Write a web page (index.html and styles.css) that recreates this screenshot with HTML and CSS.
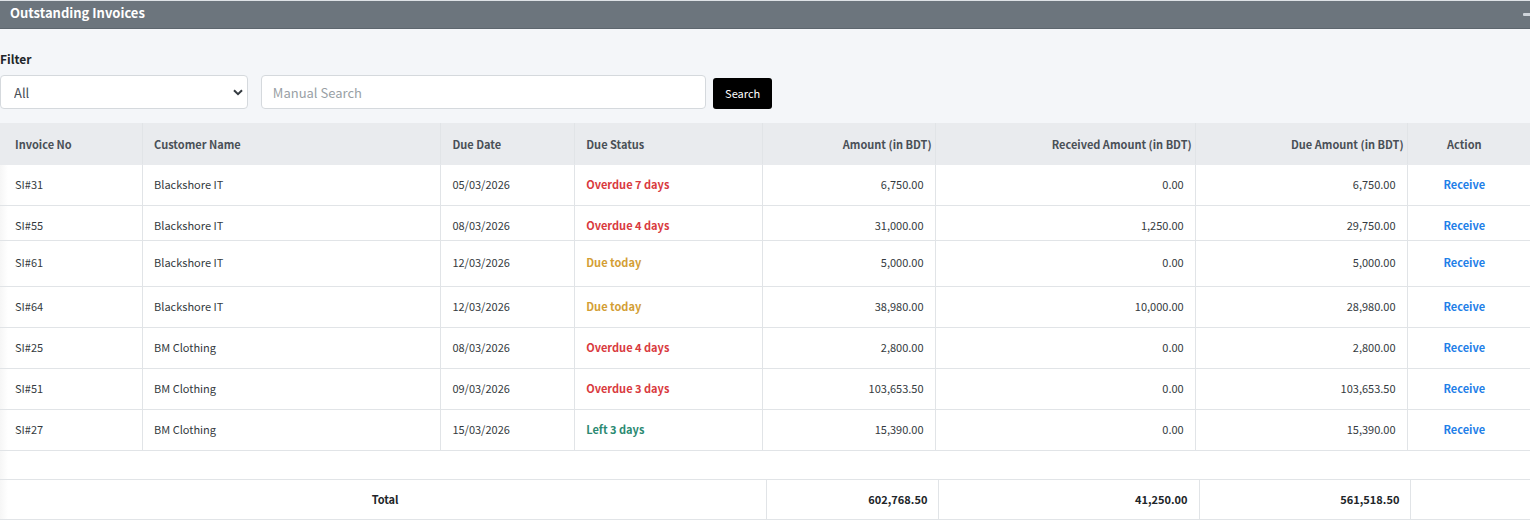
FILE: index.html
```
<!DOCTYPE html>
<html lang="en">

<head>
    <meta charset="utf-8">
    <title>Outstanding Invoices</title>
    <link rel="stylesheet" href="styles.css">
</head>

<body>

    <div class="card-header">
        <h3 class="card-title">Outstanding Invoices</h3>
        <button type="button" class="btn-collapse" aria-label="Collapse">
            <svg width="12" height="3" viewBox="0 0 12 3"><rect width="12" height="3" rx="1" fill="#ced4da"/></svg>
        </button>
    </div>

    <form class="filter">
        <label for="filter">Filter</label>
        <div class="filter-row">
            <div class="select-wrap">
                <select id="filter" class="form-control">
                    <option>All</option>
                </select>
                <svg class="chevron" width="10" height="7" viewBox="0 0 10 7"><path d="M1 1.2 L5 5.2 L9 1.2" fill="none" stroke="#343a40" stroke-width="2"/></svg>
            </div>
            <input type="text" class="form-control search" placeholder="Manual Search" aria-label="Manual Search">
            <button type="button" class="btn-search">Search</button>
        </div>
    </form>

    <div class="tables">
        <table class="invoices">
            <colgroup>
                <col class="c-no"><col class="c-name"><col class="c-date"><col class="c-status">
                <col class="c-amount"><col class="c-received"><col class="c-due"><col class="c-action">
            </colgroup>
            <thead>
                <tr>
                    <th>Invoice No</th>
                    <th>Customer Name</th>
                    <th>Due Date</th>
                    <th>Due Status</th>
                    <th class="num">Amount (in BDT)</th>
                    <th class="num">Received Amount (in BDT)</th>
                    <th class="num">Due Amount (in BDT)</th>
                    <th class="action">Action</th>
                </tr>
            </thead>
            <tbody>
                <tr>
                    <td>SI#31</td>
                    <td>Blackshore IT</td>
                    <td>05/03/2026</td>
                    <td class="overdue">Overdue 7 days</td>
                    <td class="num">6,750.00</td>
                    <td class="num">0.00</td>
                    <td class="num">6,750.00</td>
                    <td class="action"><a href="#">Receive</a></td>
                </tr>
                <tr class="short">
                    <td>SI#55</td>
                    <td>Blackshore IT</td>
                    <td>08/03/2026</td>
                    <td class="overdue">Overdue 4 days</td>
                    <td class="num">31,000.00</td>
                    <td class="num">1,250.00</td>
                    <td class="num">29,750.00</td>
                    <td class="action"><a href="#">Receive</a></td>
                </tr>
                <tr class="tall">
                    <td>SI#61</td>
                    <td>Blackshore IT</td>
                    <td>12/03/2026</td>
                    <td class="today">Due today</td>
                    <td class="num">5,000.00</td>
                    <td class="num">0.00</td>
                    <td class="num">5,000.00</td>
                    <td class="action"><a href="#">Receive</a></td>
                </tr>
                <tr>
                    <td>SI#64</td>
                    <td>Blackshore IT</td>
                    <td>12/03/2026</td>
                    <td class="today">Due today</td>
                    <td class="num">38,980.00</td>
                    <td class="num">10,000.00</td>
                    <td class="num">28,980.00</td>
                    <td class="action"><a href="#">Receive</a></td>
                </tr>
                <tr>
                    <td>SI#25</td>
                    <td>BM Clothing</td>
                    <td>08/03/2026</td>
                    <td class="overdue">Overdue 4 days</td>
                    <td class="num">2,800.00</td>
                    <td class="num">0.00</td>
                    <td class="num">2,800.00</td>
                    <td class="action"><a href="#">Receive</a></td>
                </tr>
                <tr>
                    <td>SI#51</td>
                    <td>BM Clothing</td>
                    <td>09/03/2026</td>
                    <td class="overdue">Overdue 3 days</td>
                    <td class="num">103,653.50</td>
                    <td class="num">0.00</td>
                    <td class="num">103,653.50</td>
                    <td class="action"><a href="#">Receive</a></td>
                </tr>
                <tr>
                    <td>SI#27</td>
                    <td>BM Clothing</td>
                    <td>15/03/2026</td>
                    <td class="left">Left 3 days</td>
                    <td class="num">15,390.00</td>
                    <td class="num">0.00</td>
                    <td class="num">15,390.00</td>
                    <td class="action"><a href="#">Receive</a></td>
                </tr>
            </tbody>
        </table>

        <table class="invoices totals">
            <colgroup>
                <col class="t-label"><col class="c-amount"><col class="c-received"><col class="c-due"><col>
            </colgroup>
            <tbody>
                <tr>
                    <td class="total-label">Total</td>
                    <td class="num">602,768.50</td>
                    <td class="num">41,250.00</td>
                    <td class="num">561,518.50</td>
                    <td></td>
                </tr>
            </tbody>
        </table>
    </div>

</body>

</html>
```
FILE: styles.css
```
*{
    box-sizing: border-box;
}

body{
    margin: 0;
    background: #f4f6f9;
    color: #212529;
    font-family: "Noto Sans CJK SC", "Open Sans", sans-serif;
    font-size: 11px;
    line-height: 20px;
    overflow-x: hidden;
}

.card-header{
    display: flex;
    justify-content: space-between;
    align-items: center;
    height: 29px;
    padding-left: 10px;
    background: #6c757d;
    border-top: 1px solid #dee2e6;
    border-bottom: 1px solid #5d666e;
    overflow: hidden;
}

.card-title{
    margin: 0 0 3px;
    color: #fff;
    font-size: 13px;
    font-weight: bold;
}

.btn-collapse{
    display: flex;
    margin-right: -5px;
    padding: 0;
    border: 0;
    background: none;
}

.filter{
    padding: 20px 0 14px;
}

.filter label{
    display: block;
    font-size: 12px;
    font-weight: bold;
}

.filter-row{
    display: flex;
    align-items: flex-end;
    padding-top: 6px;
}

.select-wrap{
    position: relative;
    width: 16.2%;
    margin-right: 13px;
}

.form-control{
    display: block;
    width: 100%;
    height: 34px;
    padding: 0 13px;
    border: 1px solid #d5d9dd;
    border-radius: 4px;
    background: #fff;
    color: #495057;
    font-family: inherit;
    font-size: 13px;
    appearance: none;
}

.form-control::placeholder{
    color: #999fa5;
    opacity: 1;
}

.chevron{
    position: absolute;
    right: 5px;
    top: 14px;
    pointer-events: none;
}

.search{
    width: 29.1%;
    padding: 0 11px;
    margin-right: 7px;
}

.btn-search{
    height: 31px;
    padding: 0 12px 2px;
    border: 0;
    border-radius: 3px;
    background: #000;
    color: #fff;
    font-family: inherit;
    font-size: 11px;
}

.tables{
    background: linear-gradient(to right, #f6f6f6, #fff 8px);
}

.invoices{
    width: 100%;
    table-layout: fixed;
    border-collapse: separate;
    border-spacing: 0;
}

.c-no{ width: 9.35%; }
.c-name{ width: 19.5%; }
.c-date{ width: 8.75%; }
.c-status{ width: 12.3%; }
.c-amount{ width: 11.25%; }
.c-received{ width: 17%; }
.c-due{ width: 13.85%; }
.c-action{ width: 8%; }
.t-label{ width: 50.15%; }

.invoices th,
.invoices td{
    height: 41px;
    padding: 9px 11px 0;
    border-right: 1px solid #e1e4e7;
    border-bottom: 1px solid #e1e4e7;
    text-align: left;
    vertical-align: top;
    white-space: nowrap;
}

.invoices th:first-child,
.invoices td:first-child{
    padding-left: 15px;
}

.invoices th:last-child,
.invoices td:last-child{
    border-right: 0;
}

.invoices th{
    height: 42px;
    padding-top: 11px;
    background: #e9ebee;
    border-bottom-color: #e9ebee;
    color: #495057;
}

.invoices td{
    color: #343a40;
}

.invoices .short td{
    height: 35px;
}

.invoices .tall td{
    height: 46px;
    padding-top: 11px;
}

.invoices .num{
    text-align: right;
}

.invoices th.num{
    padding-right: 3px;
}

.invoices .action{
    padding-right: 20px;
    text-align: center;
}

.invoices a{
    color: #1f80e8;
    font-weight: bold;
    text-decoration: none;
}

.invoices .overdue{
    color: #d93a3e;
    font-weight: bold;
}

.invoices .today{
    color: #d39e34;
    font-weight: bold;
}

.invoices .left{
    color: #2b8a72;
    font-weight: bold;
}

.totals{
    margin-top: 28px;
    border-top: 1px solid #e1e4e7;
}

.totals td{
    height: 40px;
    color: #212529;
    font-weight: bold;
}

.invoices .total-label{
    text-align: center;
}
```
